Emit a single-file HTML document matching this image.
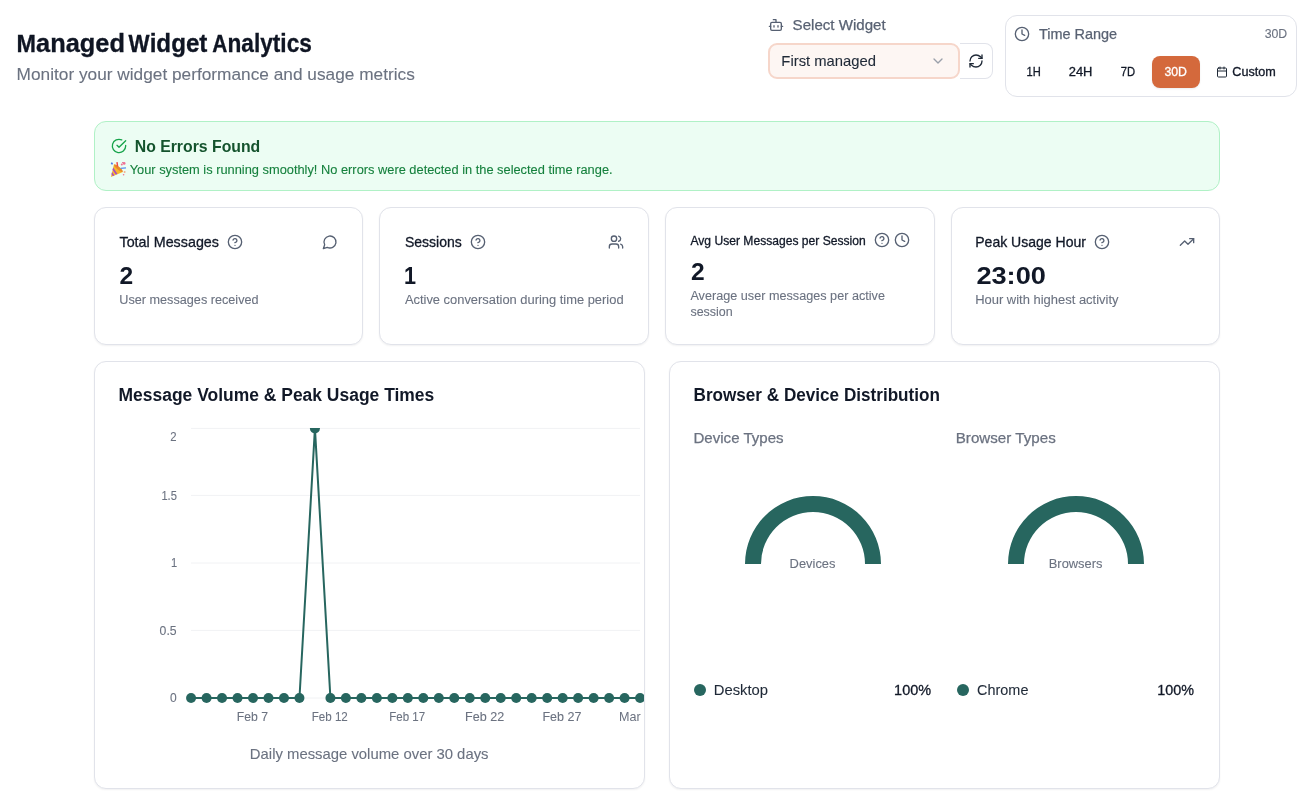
<!DOCTYPE html>
<html>
<head>
<meta charset="utf-8">
<title>Managed Widget Analytics</title>
<style>
*{box-sizing:border-box;margin:0;padding:0}
html,body{width:1309px;height:799px;overflow:hidden;background:#fff}
body{font-family:"Liberation Sans",sans-serif;color:#111827;position:relative}
.abs{position:absolute}
.t{position:absolute;white-space:nowrap;line-height:20px;transform-origin:0 0}
.card{position:absolute;background:#fff;border:1px solid #e1e3ea;border-radius:12px;box-shadow:0 1px 2px rgba(16,24,40,.06)}
svg{position:absolute;overflow:visible}
.ic{fill:none;stroke:#4b5563;stroke-width:2;stroke-linecap:round;stroke-linejoin:round}
</style>
</head>
<body>

<!-- header controls -->
<div class="abs" style="left:960px;top:43px;width:33px;height:36px;border:1px solid #e1e3ea;border-left:none;border-radius:0 8px 8px 0;background:#fff"></div>
<div class="abs" style="left:768px;top:43px;width:192px;height:36px;border:2px solid #f6d6ca;border-radius:9px;background:#fdf6f3"></div>
<div class="card" style="left:1005px;top:15px;width:292px;height:82px;box-shadow:none"></div>
<div class="abs" style="left:1152px;top:56px;width:48px;height:32px;border-radius:8px;background:#d4693c;box-shadow:0 1px 2px rgba(16,24,40,.08)"></div>

<!-- alert -->
<div class="abs" style="left:94px;top:121px;width:1126px;height:70px;border:1px solid #b0f1c6;border-radius:12px;background:#ecfdf3"></div>

<!-- stat cards -->
<div class="card" style="left:94px;top:207px;width:269px;height:138px"></div>
<div class="card" style="left:379px;top:207px;width:270px;height:138px"></div>
<div class="card" style="left:665px;top:207px;width:270px;height:138px"></div>
<div class="card" style="left:951px;top:207px;width:269px;height:138px"></div>

<!-- chart cards -->
<div class="card" style="left:94px;top:361px;width:551px;height:428px"></div>
<div class="card" style="left:669px;top:361px;width:551px;height:428px"></div>

<svg width="1309" height="799" viewBox="0 0 1309 799" style="left:0;top:0">
<defs><clipPath id="cp"><rect x="186" y="428" width="458" height="280"/></clipPath></defs>
<g stroke="#f1f2f4" stroke-width="1"><line x1="191" x2="640" y1="428.4" y2="428.4"/><line x1="191" x2="640" y1="495.4" y2="495.4"/><line x1="191" x2="640" y1="563.0" y2="563.0"/><line x1="191" x2="640" y1="630.4" y2="630.4"/><line x1="191" x2="640" y1="698.0" y2="698.0"/></g>
<g clip-path="url(#cp)"><polyline points="191.07,698.0 206.55,698.0 222.04,698.0 237.52,698.0 253.00,698.0 268.49,698.0 283.97,698.0 299.45,698.0 314.93,428.4 330.42,698.0 345.90,698.0 361.38,698.0 376.87,698.0 392.35,698.0 407.83,698.0 423.31,698.0 438.80,698.0 454.28,698.0 469.76,698.0 485.25,698.0 500.73,698.0 516.21,698.0 531.70,698.0 547.18,698.0 562.66,698.0 578.14,698.0 593.63,698.0 609.11,698.0 624.59,698.0 640.08,698.0" fill="none" stroke="#27665f" stroke-width="2" stroke-linejoin="round"/>
<g fill="#27665f"><circle cx="191.07" cy="698.0" r="5"/><circle cx="206.55" cy="698.0" r="5"/><circle cx="222.04" cy="698.0" r="5"/><circle cx="237.52" cy="698.0" r="5"/><circle cx="253.00" cy="698.0" r="5"/><circle cx="268.49" cy="698.0" r="5"/><circle cx="283.97" cy="698.0" r="5"/><circle cx="299.45" cy="698.0" r="5"/><circle cx="314.93" cy="428.4" r="5"/><circle cx="330.42" cy="698.0" r="5"/><circle cx="345.90" cy="698.0" r="5"/><circle cx="361.38" cy="698.0" r="5"/><circle cx="376.87" cy="698.0" r="5"/><circle cx="392.35" cy="698.0" r="5"/><circle cx="407.83" cy="698.0" r="5"/><circle cx="423.31" cy="698.0" r="5"/><circle cx="438.80" cy="698.0" r="5"/><circle cx="454.28" cy="698.0" r="5"/><circle cx="469.76" cy="698.0" r="5"/><circle cx="485.25" cy="698.0" r="5"/><circle cx="500.73" cy="698.0" r="5"/><circle cx="516.21" cy="698.0" r="5"/><circle cx="531.70" cy="698.0" r="5"/><circle cx="547.18" cy="698.0" r="5"/><circle cx="562.66" cy="698.0" r="5"/><circle cx="578.14" cy="698.0" r="5"/><circle cx="593.63" cy="698.0" r="5"/><circle cx="609.11" cy="698.0" r="5"/><circle cx="624.59" cy="698.0" r="5"/><circle cx="640.08" cy="698.0" r="5"/></g></g>
</svg>
<svg width="1309" height="799" viewBox="0 0 1309 799" style="left:0;top:0"><path d="M745 564A68 68 0 0 1 881 564L865 564A52 52 0 0 0 761 564Z" fill="#27665f"/><path d="M1008 564A68 68 0 0 1 1144 564L1128 564A52 52 0 0 0 1024 564Z" fill="#27665f"/></svg>
<div class="abs" style="left:694px;top:684px;width:12px;height:12px;border-radius:6px;background:#27665f"></div>
<div class="abs" style="left:957px;top:684px;width:12px;height:12px;border-radius:6px;background:#27665f"></div>
<svg class="ic" style="left:768px;top:17px;stroke:#566072;stroke-width:2;" width="16" height="16" viewBox="0 0 24 24"><path d="M12 8V4H8"/><rect width="16" height="12" x="4" y="8" rx="2"/><path d="M2 14h2"/><path d="M20 14h2"/><path d="M15 13v2"/><path d="M9 13v2"/></svg>
<svg class="ic" style="left:930px;top:53px;stroke:#9aa0aa;stroke-width:2;" width="16" height="16" viewBox="0 0 24 24"><path d="m6 9 6 6 6-6"/></svg>
<svg class="ic" style="left:968px;top:53px;stroke:#1f2937;stroke-width:2;" width="16" height="16" viewBox="0 0 24 24"><path d="M3 12a9 9 0 0 1 9-9 9.75 9.75 0 0 1 6.74 2.74L21 8"/><path d="M21 3v5h-5"/><path d="M21 12a9 9 0 0 1-9 9 9.75 9.75 0 0 1-6.74-2.74L3 16"/><path d="M8 16H3v5"/></svg>
<svg class="ic" style="left:1014px;top:26px;stroke:#566072;stroke-width:2;" width="16" height="16" viewBox="0 0 24 24"><circle cx="12" cy="12" r="10"/><polyline points="12 6 12 12 16 14"/></svg>
<svg class="ic" style="left:1216px;top:66px;stroke:#1f2937;stroke-width:2;" width="12" height="12" viewBox="0 0 24 24"><path d="M8 2v4"/><path d="M16 2v4"/><rect width="18" height="18" x="3" y="4" rx="2"/><path d="M3 10h18"/></svg>
<svg class="ic" style="left:111px;top:138px;stroke:#16a34a;stroke-width:2;" width="16" height="16" viewBox="0 0 24 24"><path d="M22 11.08V12a10 10 0 1 1-5.93-9.14"/><path d="m9 11 3 3L22 4"/></svg>
<svg class="ic" style="left:227px;top:234px;stroke:#566072;stroke-width:2;" width="16" height="16" viewBox="0 0 24 24"><circle cx="12" cy="12" r="10"/><path d="M9.09 9a3 3 0 0 1 5.83 1c0 2-3 3-3 3"/><path d="M12 17h.01"/></svg>
<svg class="ic" style="left:322px;top:234px;stroke:#566072;stroke-width:2;" width="16" height="16" viewBox="0 0 24 24"><path d="M7.9 20A9 9 0 1 0 4 16.1L2 22Z"/></svg>
<svg class="ic" style="left:470px;top:234px;stroke:#566072;stroke-width:2;" width="16" height="16" viewBox="0 0 24 24"><circle cx="12" cy="12" r="10"/><path d="M9.09 9a3 3 0 0 1 5.83 1c0 2-3 3-3 3"/><path d="M12 17h.01"/></svg>
<svg class="ic" style="left:608px;top:234px;stroke:#566072;stroke-width:2;" width="16" height="16" viewBox="0 0 24 24"><path d="M16 21v-2a4 4 0 0 0-4-4H6a4 4 0 0 0-4 4v2"/><circle cx="9" cy="7" r="4"/><path d="M22 21v-2a4 4 0 0 0-3-3.870"/><path d="M16 3.130a4 4 0 0 1 0 7.750"/></svg>
<svg class="ic" style="left:874px;top:232px;stroke:#566072;stroke-width:2;" width="16" height="16" viewBox="0 0 24 24"><circle cx="12" cy="12" r="10"/><path d="M9.09 9a3 3 0 0 1 5.83 1c0 2-3 3-3 3"/><path d="M12 17h.01"/></svg>
<svg class="ic" style="left:894px;top:232px;stroke:#566072;stroke-width:2;" width="16" height="16" viewBox="0 0 24 24"><circle cx="12" cy="12" r="10"/><polyline points="12 6 12 12 16 14"/></svg>
<svg class="ic" style="left:1094px;top:234px;stroke:#566072;stroke-width:2;" width="16" height="16" viewBox="0 0 24 24"><circle cx="12" cy="12" r="10"/><path d="M9.09 9a3 3 0 0 1 5.83 1c0 2-3 3-3 3"/><path d="M12 17h.01"/></svg>
<svg class="ic" style="left:1179px;top:234px;stroke:#566072;stroke-width:2;" width="16" height="16" viewBox="0 0 24 24"><polyline points="22 7 13.5 15.5 8.5 10.5 2 17"/><polyline points="16 7 22 7 22 13"/></svg>
<svg style="left:110px;top:161px" width="17" height="17" viewBox="0 0 17 17">
<path d="M.9 15.9L4 3.3C7 3.6 12.2 7.8 12.8 10.9Z" fill="#f7b92b"/>
<path d="M3.2 6.6l4.3 6.3-1.7.7-3.3-4.8zM2 11l2.4 3.4-1.6.7-1.3-1.9z" fill="#a94bc0"/>
<ellipse cx="8.4" cy="7.2" rx="1.4" ry="5.4" transform="rotate(-50 8.4 7.2)" fill="#e8892b"/>
<path d="M10.6 7.4L16 6.9" stroke="#5b8def" stroke-width="1.3" fill="none"/>
<path d="M7.6 5.6L7 1.2" stroke="#ee4b4b" stroke-width="1.5" fill="none"/>
<rect x="1" y="1.6" width="1.8" height="1.8" transform="rotate(20 1.9 2.5)" fill="#4f7be8"/>
<circle cx="14.2" cy="2.4" r="1.3" fill="#ef6f93"/><circle cx="11.8" cy="3.6" r="1" fill="#ef6f93"/><circle cx="12.8" cy="1.6" r=".7" fill="#e0507a"/>
<circle cx="14.6" cy="11" r="1" fill="#f0b090"/><circle cx="13.6" cy="13.8" r=".8" fill="#ef6f93"/>
</svg>
<div class="abs" style="left:600px;top:700px;width:41px;height:30px;overflow:hidden;will-change:transform"><div class="t" style="left:18px;top:7px;font-size:12.4px;color:#6b7280;transform:translateX(1.1px) scaleX(1.015)">Mar 4</div></div>
<div class="abs" style="left:0;top:0;width:1309px;height:799px;will-change:transform">
<div class="t" style="left:16px;top:33px;font-size:23.2px;color:#0f1523;font-weight:bold;transform:translateX(0.59px) scaleX(1.0075);-webkit-text-stroke:0.3px #0f1523;">M<span style="font-size:25.2px">anaged</span></div>
<div class="t" style="left:128px;top:33px;font-size:23.2px;color:#0f1523;font-weight:bold;transform:translateX(0.60px) scaleX(0.9605);-webkit-text-stroke:0.3px #0f1523;">W<span style="font-size:25.2px">idget</span></div>
<div class="t" style="left:212px;top:33px;font-size:23.2px;color:#0f1523;font-weight:bold;transform:translateX(0.36px) scaleX(0.9000);-webkit-text-stroke:0.3px #0f1523;">A<span style="font-size:25.2px">nalytics</span></div>
<div class="t" style="left:16px;top:65px;font-size:16.6px;color:#6b7280;transform:translateX(0.56px) scaleX(1.0405);-webkit-text-stroke:0.1px #6b7280;">Monitor your widget performance and usage metrics</div>
<div class="t" style="left:792px;top:15px;font-size:14.4px;color:#596273;transform:translateX(0.60px) scaleX(1.0475);-webkit-text-stroke:0.25px #596273;">Select Widget</div>
<div class="t" style="left:781px;top:51px;font-size:14.4px;color:#1f2937;transform:translateX(0.37px) scaleX(1.0288);-webkit-text-stroke:0.1px #1f2937;">First managed</div>
<div class="t" style="left:1038px;top:24px;font-size:14.4px;color:#596273;transform:translateX(0.90px) scaleX(1.0046);-webkit-text-stroke:0.25px #596273;">Time Range</div>
<div class="t" style="left:1264px;top:24px;font-size:12.4px;color:#6b7280;transform:translateX(0.70px) scaleX(0.9920);-webkit-text-stroke:0.1px #6b7280;">30D</div>
<div class="t" style="left:1026px;top:62px;font-size:12.4px;color:#111827;transform:translateX(0.45px) scaleX(0.9000);-webkit-text-stroke:0.3px #111827;">1H</div>
<div class="t" style="left:1068px;top:62px;font-size:12.4px;color:#111827;transform:translateX(0.70px) scaleX(1.0421);-webkit-text-stroke:0.3px #111827;">24H</div>
<div class="t" style="left:1120px;top:62px;font-size:12.4px;color:#111827;transform:translateX(0.70px) scaleX(0.9062);-webkit-text-stroke:0.3px #111827;">7D</div>
<div class="t" style="left:1164px;top:62px;font-size:12.4px;color:#ffffff;transform:translateX(0.40px) scaleX(0.9920);-webkit-text-stroke:0.3px #ffffff;">30D</div>
<div class="t" style="left:1232px;top:62px;font-size:12.4px;color:#111827;transform:translateX(0.30px) scaleX(1.0196);-webkit-text-stroke:0.3px #111827;">Custom</div>
<div class="t" style="left:134px;top:136px;font-size:16.2px;color:#14532d;font-weight:bold;transform:translateX(0.72px) scaleX(0.9762);">No Errors Found</div>
<div class="t" style="left:129px;top:160px;font-size:12.5px;color:#15803d;transform:translateX(0.70px) scaleX(1.0261);-webkit-text-stroke:0.1px #15803d;">Your system is running smoothly! No errors were detected in the selected time range.</div>
<div class="t" style="left:119px;top:232px;font-size:14.4px;color:#111827;transform:translateX(0.50px) scaleX(0.9951);-webkit-text-stroke:0.3px #111827;">Total Messages</div>
<div class="t" style="left:119px;top:266px;font-size:24px;color:#111827;font-weight:bold;transform:translateX(0.50px) scaleX(1.0231);">2</div>
<div class="t" style="left:119px;top:290px;font-size:12.5px;color:#6b7280;transform:translateX(0.30px) scaleX(1.0123);-webkit-text-stroke:0.1px #6b7280;">User messages received</div>
<div class="t" style="left:404px;top:232px;font-size:14.4px;color:#111827;transform:translateX(0.90px) scaleX(0.9743);-webkit-text-stroke:0.3px #111827;">Sessions</div>
<div class="t" style="left:404px;top:266px;font-size:24px;color:#111827;font-weight:bold;transform:translateX(0.00px) scaleX(0.9000);">1</div>
<div class="t" style="left:404px;top:290px;font-size:12.5px;color:#6b7280;transform:translateX(0.90px) scaleX(1.0318);-webkit-text-stroke:0.1px #6b7280;">Active conversation during time period</div>
<div class="t" style="left:690px;top:231px;font-size:12.5px;color:#111827;transform:translateX(0.40px) scaleX(0.9682);-webkit-text-stroke:0.3px #111827;">Avg User Messages per Session</div>
<div class="t" style="left:691px;top:262px;font-size:24px;color:#111827;font-weight:bold;transform:translateX(0.00px) scaleX(1.0231);">2</div>
<div class="t" style="left:690px;top:286px;font-size:12.5px;color:#6b7280;transform:translateX(0.40px) scaleX(1.0121);-webkit-text-stroke:0.1px #6b7280;">Average user messages per active</div>
<div class="t" style="left:690px;top:302px;font-size:12.5px;color:#6b7280;transform:translateX(0.40px) scaleX(0.9969);-webkit-text-stroke:0.1px #6b7280;">session</div>
<div class="t" style="left:975px;top:232px;font-size:14.4px;color:#111827;transform:translateX(0.22px) scaleX(0.9752);-webkit-text-stroke:0.3px #111827;">Peak Usage Hour</div>
<div class="t" style="left:976px;top:266px;font-size:24px;color:#111827;font-weight:bold;transform:translateX(0.40px) scaleX(1.1321);">23:00</div>
<div class="t" style="left:975px;top:290px;font-size:12.5px;color:#6b7280;transform:translateX(0.16px) scaleX(1.0370);-webkit-text-stroke:0.1px #6b7280;">Hour with highest activity</div>
<div class="t" style="left:118px;top:385px;font-size:17.6px;color:#111827;font-weight:bold;transform:translateX(0.51px) scaleX(0.9926);">Message Volume &amp; Peak Usage Times</div>
<div class="t" style="left:693px;top:385px;font-size:17.6px;color:#111827;font-weight:bold;transform:translateX(0.53px) scaleX(0.9731);">Browser &amp; Device Distribution</div>
<div class="t" style="left:170px;top:427px;font-size:12.4px;color:#6b7280;transform:translateX(0.20px) scaleX(0.9143);-webkit-text-stroke:0.1px #6b7280;">2</div>
<div class="t" style="left:161px;top:486px;font-size:12.4px;color:#6b7280;transform:translateX(0.40px) scaleX(0.9000);-webkit-text-stroke:0.1px #6b7280;">1.5</div>
<div class="t" style="left:171px;top:553px;font-size:12.4px;color:#6b7280;transform:translateX(0.05px) scaleX(0.9000);-webkit-text-stroke:0.1px #6b7280;">1</div>
<div class="t" style="left:159px;top:621px;font-size:12.4px;color:#6b7280;transform:translateX(0.60px) scaleX(0.9865);-webkit-text-stroke:0.1px #6b7280;">0.5</div>
<div class="t" style="left:169px;top:688px;font-size:12.4px;color:#6b7280;transform:translateX(0.90px) scaleX(0.9714);-webkit-text-stroke:0.1px #6b7280;">0</div>
<div class="t" style="left:236px;top:707px;font-size:12.4px;color:#6b7280;transform:translateX(0.71px) scaleX(0.9872);-webkit-text-stroke:0.1px #6b7280;">Feb 7</div>
<div class="t" style="left:311px;top:707px;font-size:12.4px;color:#6b7280;transform:translateX(0.66px) scaleX(0.9367);-webkit-text-stroke:0.1px #6b7280;">Feb 12</div>
<div class="t" style="left:389px;top:707px;font-size:12.4px;color:#6b7280;transform:translateX(0.27px) scaleX(0.9288);-webkit-text-stroke:0.1px #6b7280;">Feb 17</div>
<div class="t" style="left:465px;top:707px;font-size:12.4px;color:#6b7280;transform:translateX(0.09px) scaleX(1.0137);-webkit-text-stroke:0.1px #6b7280;">Feb 22</div>
<div class="t" style="left:542px;top:707px;font-size:12.4px;color:#6b7280;transform:translateX(0.39px) scaleX(1.0110);-webkit-text-stroke:0.1px #6b7280;">Feb 27</div>
<div class="t" style="left:249px;top:744px;font-size:14.4px;color:#6b7280;transform:translateX(0.87px) scaleX(1.0323);-webkit-text-stroke:0.1px #6b7280;">Daily message volume over 30 days</div>
<div class="t" style="left:693px;top:428px;font-size:14.4px;color:#6b7280;transform:translateX(0.45px) scaleX(1.0472);-webkit-text-stroke:0.25px #6b7280;">Device Types</div>
<div class="t" style="left:955px;top:428px;font-size:14.4px;color:#6b7280;transform:translateX(0.75px) scaleX(1.0535);-webkit-text-stroke:0.25px #6b7280;">Browser Types</div>
<div class="t" style="left:789px;top:554px;font-size:12.4px;color:#6b7280;transform:translateX(0.56px) scaleX(1.0426);-webkit-text-stroke:0.1px #6b7280;">Devices</div>
<div class="t" style="left:1048px;top:554px;font-size:12.4px;color:#6b7280;transform:translateX(0.76px) scaleX(1.0388);-webkit-text-stroke:0.1px #6b7280;">Browsers</div>
<div class="t" style="left:713px;top:680px;font-size:14.4px;color:#1f2937;transform:translateX(0.77px) scaleX(1.0273);-webkit-text-stroke:0.1px #1f2937;">Desktop</div>
<div class="t" style="left:894px;top:680px;font-size:14.4px;color:#111827;transform:translateX(0.09px) scaleX(1.0053);-webkit-text-stroke:0.3px #111827;">100%</div>
<div class="t" style="left:977px;top:680px;font-size:14.4px;color:#1f2937;transform:translateX(0.10px) scaleX(1.0024);-webkit-text-stroke:0.1px #1f2937;">Chrome</div>
<div class="t" style="left:1157px;top:680px;font-size:14.4px;color:#111827;transform:translateX(0.30px) scaleX(0.9969);-webkit-text-stroke:0.3px #111827;">100%</div>
</div>

</body>
</html>
